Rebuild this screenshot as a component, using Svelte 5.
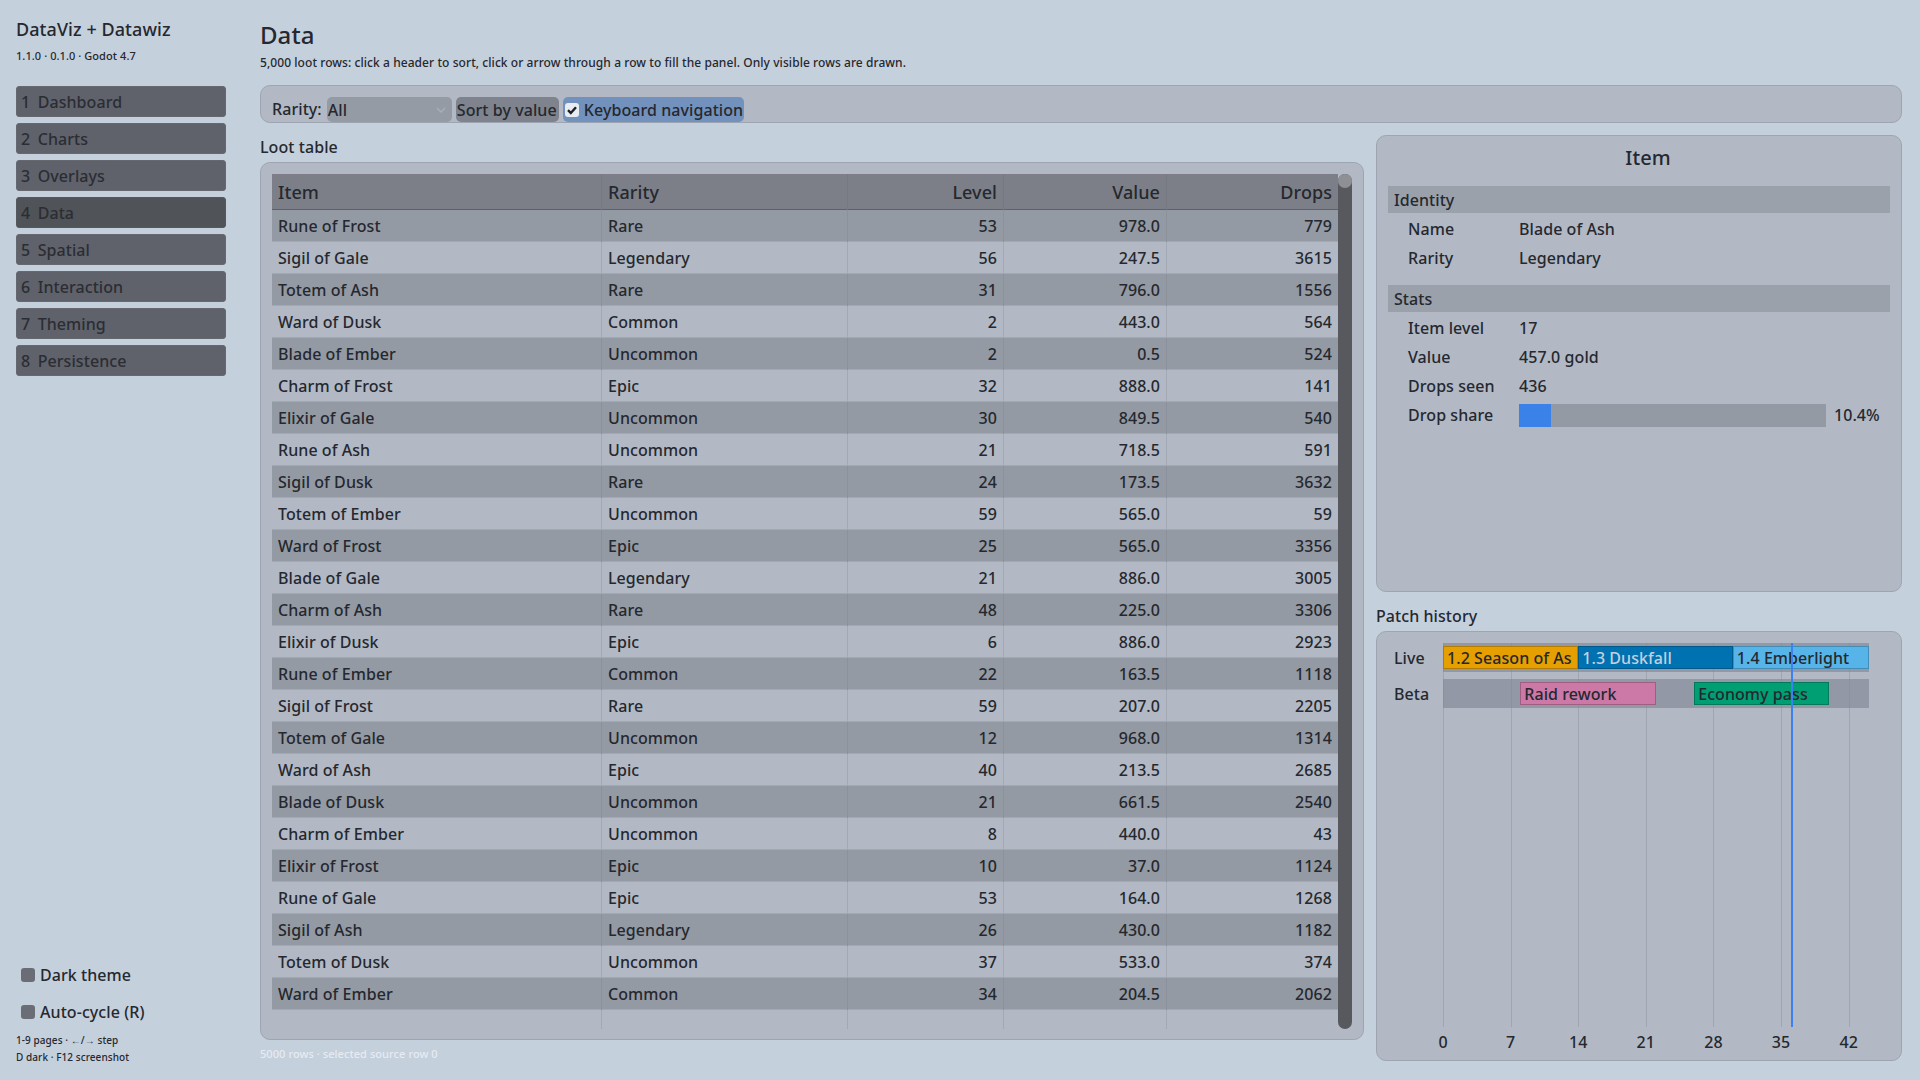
<script>
  const nav = ['Dashboard', 'Charts', 'Overlays', 'Data', 'Spatial', 'Interaction', 'Theming', 'Persistence'];
  const rows = [
    ['Rune of Frost', 'Rare', 53, '978.0', 779],
    ['Sigil of Gale', 'Legendary', 56, '247.5', 3615],
    ['Totem of Ash', 'Rare', 31, '796.0', 1556],
    ['Ward of Dusk', 'Common', 2, '443.0', 564],
    ['Blade of Ember', 'Uncommon', 2, '0.5', 524],
    ['Charm of Frost', 'Epic', 32, '888.0', 141],
    ['Elixir of Gale', 'Uncommon', 30, '849.5', 540],
    ['Rune of Ash', 'Uncommon', 21, '718.5', 591],
    ['Sigil of Dusk', 'Rare', 24, '173.5', 3632],
    ['Totem of Ember', 'Uncommon', 59, '565.0', 59],
    ['Ward of Frost', 'Epic', 25, '565.0', 3356],
    ['Blade of Gale', 'Legendary', 21, '886.0', 3005],
    ['Charm of Ash', 'Rare', 48, '225.0', 3306],
    ['Elixir of Dusk', 'Epic', 6, '886.0', 2923],
    ['Rune of Ember', 'Common', 22, '163.5', 1118],
    ['Sigil of Frost', 'Rare', 59, '207.0', 2205],
    ['Totem of Gale', 'Uncommon', 12, '968.0', 1314],
    ['Ward of Ash', 'Epic', 40, '213.5', 2685],
    ['Blade of Dusk', 'Uncommon', 21, '661.5', 2540],
    ['Charm of Ember', 'Uncommon', 8, '440.0', 43],
    ['Elixir of Frost', 'Epic', 10, '37.0', 1124],
    ['Rune of Gale', 'Epic', 53, '164.0', 1268],
    ['Sigil of Ash', 'Legendary', 26, '430.0', 1182],
    ['Totem of Dusk', 'Uncommon', 37, '533.0', 374],
    ['Ward of Ember', 'Common', 34, '204.5', 2062]
  ];
  const identity = [['Name', 'Blade of Ash'], ['Rarity', 'Legendary']];
  const stats = [['Item level', '17'], ['Value', '457.0 gold'], ['Drops seen', '436']];
  const domain = 44.1;
  const ticks = [0, 7, 14, 21, 28, 35, 42];
  const tracks = [
    { name: 'Live', bars: [
      { label: '1.2 Season of As', start: 0, end: 14, cls: 'amber' },
      { label: '1.3 Duskfall', start: 14, end: 30, cls: 'blue' },
      { label: '1.4 Emberlight', start: 30, end: 44.1, cls: 'sky' }
    ] },
    { name: 'Beta', bars: [
      { label: 'Raid rework', start: 8, end: 22, cls: 'pink' },
      { label: 'Economy pass', start: 26, end: 40, cls: 'green' }
    ] }
  ];
  const pct = (v) => `${(v / domain) * 100}%`;
</script>

<div class="page">
  <aside class="sidebar">
    <h1>DataViz + Datawiz</h1>
    <p class="version">1.1.0 · 0.1.0 · Godot 4.7</p>
    <nav>
      {#each nav as name, i}
        <button class:active={name === 'Data'}>{i + 1}  {name}</button>
      {/each}
    </nav>
    <div class="side-foot">
      <div class="toggle"><span class="box"></span>Dark theme</div>
      <div class="toggle"><span class="box"></span>Auto-cycle (R)</div>
      <p class="hint">1-9 pages · ←/→ step<br />D dark · F12 screenshot</p>
    </div>
  </aside>

  <main>
    <h2>Data</h2>
    <p class="sub">5,000 loot rows: click a header to sort, click or arrow through a row to fill the panel. Only visible rows are drawn.</p>

    <div class="toolbar">
      <span class="tool-label">Rarity:</span>
      <div class="select">
        All
        <svg width="10" height="6" viewBox="0 0 10 6"><path d="M1 1l4 4 4-4" fill="none" stroke="#a7adb8" stroke-width="1.6" /></svg>
      </div>
      <button class="tool-btn">Sort by value</button>
      <div class="tool-check">
        <span class="checkbox">
          <svg width="14" height="14" viewBox="0 0 14 14"><path d="M3 7.2l2.8 2.8L11 4.2" fill="none" stroke="#1d1f24" stroke-width="2.4" /></svg>
        </span>
        Keyboard navigation
      </div>
    </div>

    <div class="columns">
      <section class="left">
        <div class="caption">Loot table</div>
        <div class="panel table-panel">
          <div class="table">
            <div class="row head">
              <span>Item</span><span>Rarity</span><span class="num">Level</span><span class="num">Value</span><span class="num">Drops</span>
            </div>
            {#each rows as r, i}
              <div class="row" class:odd={i % 2 === 0}>
                <span>{r[0]}</span><span>{r[1]}</span><span class="num">{r[2]}</span><span class="num">{r[3]}</span><span class="num">{r[4]}</span>
              </div>
            {/each}
            <div class="row filler"><span></span><span></span><span></span><span></span><span></span></div>
          </div>
          <div class="scrollbar"><div class="grabber"></div></div>
        </div>
        <div class="faint">5000 rows · selected source row 0</div>
      </section>

      <section class="right">
        <div class="panel item-panel">
          <div class="item-title">Item</div>
          <div class="band">Identity</div>
          <div class="props">
            {#each identity as p}
              <div class="prop"><span>{p[0]}</span><span>{p[1]}</span></div>
            {/each}
          </div>
          <div class="band">Stats</div>
          <div class="props">
            {#each stats as p}
              <div class="prop"><span>{p[0]}</span><span>{p[1]}</span></div>
            {/each}
            <div class="prop">
              <span>Drop share</span>
              <div class="meter"><div class="meter-fill" style="width: 10.4%"></div></div>
              <span class="meter-val">10.4%</span>
            </div>
          </div>
        </div>

        <div class="caption patch-cap">Patch history</div>
        <div class="panel gantt">
          <div class="gantt-main">
            <div class="track-names">
              {#each tracks as t}
                <div>{t.name}</div>
              {/each}
            </div>
            <div class="plot">
              {#each ticks as t}
                <div class="gridline" style={`left: ${pct(t)}`}></div>
              {/each}
              {#each tracks as t}
                <div class="track">
                  {#each t.bars as b}
                    <div class={`bar ${b.cls}`} style={`left: ${pct(b.start)}; width: ${pct(b.end - b.start)}`}>{b.label}</div>
                  {/each}
                </div>
              {/each}
              <div class="cursor" style={`left: ${pct(36)}`}></div>
            </div>
          </div>
          <div class="axis">
            {#each ticks as t}
              <span style={`left: ${pct(t)}`}>{t}</span>
            {/each}
          </div>
        </div>
      </section>
    </div>
  </main>
</div>

<style>
  :global(body) {
    margin: 0;
    background: #c5d0dd;
    color: #25282e;
    font-family: "Noto Sans", sans-serif;
    font-size: 16px;
    font-weight: 500;
    letter-spacing: 0.07px;
  }

  .page {
    display: flex;
    height: 1080px;
    overflow: hidden;
  }

  .sidebar {
    display: flex;
    flex-direction: column;
    width: 210px;
    margin: 0 34px 0 16px;
    height: 1080px;
    box-sizing: border-box;
    padding-top: 17px;
  }

  h1 {
    margin: 0;
    font-size: 18px;
    font-weight: 500;
    line-height: 25px;
  }

  .version {
    margin: 6px 0 0;
    font-size: 11px;
    line-height: 15px;
  }

  nav {
    display: flex;
    flex-direction: column;
    gap: 6px;
    margin-top: 23px;
  }

  nav button {
    height: 31px;
    padding: 0 0 0 4px;
    border: 1px solid #65686f;
    border-radius: 3px;
    background: #5f626a;
    color: #2b2d33;
    font: 500 16px/22px "Noto Sans", sans-serif;
    letter-spacing: inherit;
    word-spacing: -0.5px;
    text-align: left;
    white-space: pre;
  }

  nav button.active {
    background: #505357;
    border-color: #55585d;
  }

  .side-foot {
    margin-top: auto;
    padding-bottom: 14px;
  }

  .toggle {
    display: flex;
    align-items: center;
    gap: 5px;
    height: 31px;
    margin-bottom: 6px;
    padding-left: 5px;
  }

  .box {
    width: 14px;
    height: 14px;
    border-radius: 3px;
    background: #6a6d75;
  }

  .hint {
    margin: -1px 0 0;
    font-size: 10px;
    line-height: 17px;
  }

  main {
    width: 1642px;
    padding-top: 17px;
  }

  h2 {
    margin: 0;
    font-size: 24px;
    font-weight: 500;
    line-height: 36px;
  }

  .sub {
    margin: 1px 0 0;
    font-size: 12px;
    line-height: 17px;
  }

  .panel {
    box-sizing: border-box;
    border: 1px solid #9ea5b2;
    border-radius: 10px;
    background: #b2b9c5;
  }

  .toolbar {
    display: flex;
    align-items: flex-end;
    gap: 4px;
    box-sizing: border-box;
    height: 38px;
    margin-top: 14px;
    padding: 0 0 0 11px;
    border: 1px solid #9ea5b2;
    border-radius: 10px;
    background: #b2b9c5;
    line-height: 26px;
  }

  .tool-label {
    margin-right: 1px;
  }

  .select, .tool-btn, .tool-check {
    display: flex;
    align-items: center;
    box-sizing: border-box;
    height: 25px;
    border-radius: 5px;
    font: 500 16px/26px "Noto Sans", sans-serif;
    letter-spacing: inherit;
    color: #25282e;
  }

  .select {
    justify-content: space-between;
    width: 125px;
    padding: 0 6px 0 1px;
    background: #959ba5;
  }

  .tool-btn {
    width: 103px;
    padding: 0 0 0 1px;
    border: 0;
    background: #7f838d;
  }

  .tool-check {
    gap: 5px;
    width: 181px;
    padding-left: 2px;
    background: #7391bd;
  }

  .checkbox {
    display: flex;
    width: 14px;
    height: 14px;
    border-radius: 3px;
    background: #e9edf3;
  }

  .columns {
    display: flex;
    gap: 12px;
    margin-top: 12px;
  }

  .left {
    width: 1104px;
  }

  .caption {
    line-height: 23px;
  }

  .left .caption {
    line-height: 25px;
  }

  .table-panel {
    display: flex;
    height: 878px;
    margin-top: 2px;
    padding: 11px 11px 10px 11px;
  }

  .table {
    display: flex;
    flex-direction: column;
    width: 1066px;
  }

  .row {
    display: grid;
    grid-template-columns: 330px 246px 156px 163px 171px;
    box-sizing: border-box;
    height: 32px;
    border-bottom: 1px solid #a3a9b4;
    line-height: 32px;
  }

  .row span {
    padding: 0 6px;
    border-right: 1px solid #a3a9b4;
  }

  .row span:last-child {
    border-right: 0;
  }

  .row.odd {
    background: #949aa4;
  }

  .row.odd span {
    border-right-color: #8c929c;
  }

  .row.head {
    height: 36px;
    background: #7c7f87;
    border-bottom: 1px solid #5e616a;
    font-size: 18px;
    line-height: 36px;
  }

  .row.head span {
    border-right-color: #767982;
  }

  .row.filler {
    flex: 1;
    border-bottom: 0;
  }

  .num {
    text-align: right;
  }

  .scrollbar {
    width: 14px;
    border-radius: 7px;
    background: #57595e;
  }

  .grabber {
    height: 14px;
    border-radius: 7px;
    background: #8e9095;
  }

  .faint {
    margin-top: 6px;
    font-size: 11px;
    line-height: 15px;
    color: #e6ebf2;
  }

  .right {
    width: 526px;
  }

  .item-panel {
    height: 457px;
    padding: 0 11px;
  }

  .item-title {
    height: 50px;
    padding-left: 18px;
    font-size: 20px;
    line-height: 43px;
    text-align: center;
  }

  .band {
    height: 27px;
    padding-left: 6px;
    background: #9aa1ab;
    line-height: 28px;
  }

  .props {
    display: flex;
    flex-direction: column;
    gap: 7px;
    padding: 5px 0 16px 20px;
  }

  .prop {
    display: flex;
    align-items: center;
    height: 22px;
  }

  .prop > span:first-child {
    width: 111px;
  }

  .meter {
    width: 307px;
    height: 23px;
    background: #939aa4;
  }

  .meter-fill {
    height: 100%;
    background: #3b82e8;
  }

  .meter-val {
    margin-left: 8px;
  }

  .patch-cap {
    margin-top: 13px;
  }

  .gantt {
    height: 430px;
    margin-top: 3px;
    padding: 11px 0 0 17px;
  }

  .gantt-main {
    display: flex;
  }

  .track-names {
    width: 49px;
    display: flex;
    flex-direction: column;
    gap: 7px;
  }

  .track-names div {
    height: 29px;
    line-height: 30px;
  }

  .plot {
    position: relative;
    display: flex;
    flex-direction: column;
    gap: 7px;
    width: 426px;
    height: 384px;
  }

  .gridline {
    position: absolute;
    top: 0;
    bottom: 0;
    width: 1px;
    background: #a0a6b1;
  }

  .track {
    position: relative;
    height: 29px;
    background: rgba(126, 133, 145, 0.62);
  }

  .bar {
    position: absolute;
    top: 3px;
    height: 23px;
    box-sizing: border-box;
    padding-left: 3px;
    overflow: hidden;
    border: 1px solid rgba(0, 0, 0, 0.22);
    line-height: 22px;
    white-space: nowrap;
  }

  .amber { background: #e69f00; }
  .blue { background: #0072b2; color: #c5d0de; }
  .sky { background: #56b4e9; }
  .pink { background: #cc79a7; }
  .green { background: #009e73; }

  .cursor {
    position: absolute;
    top: 0;
    bottom: 0;
    width: 2px;
    background: #3b82f0;
  }

  .axis {
    position: relative;
    width: 426px;
    height: 22px;
    margin: 4px 0 0 49px;
    line-height: 22px;
  }

  .axis span {
    position: absolute;
    transform: translateX(-50%);
  }
</style>
